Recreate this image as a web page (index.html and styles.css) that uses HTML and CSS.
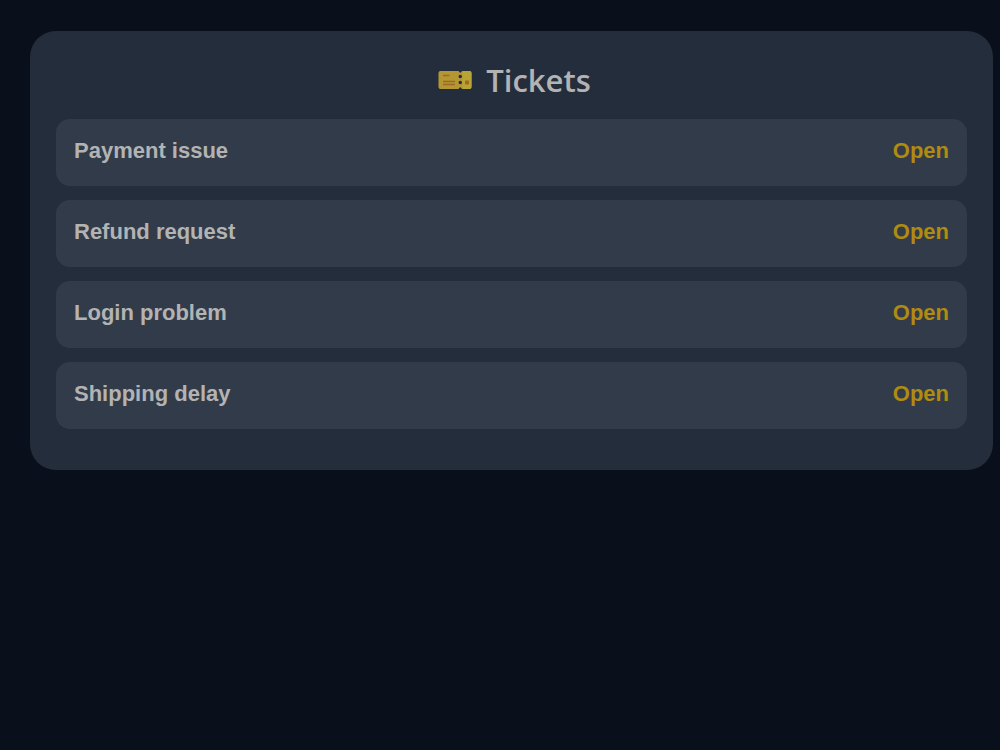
FILE: index.html
```html
<!DOCTYPE html>
<html lang="en">
<head>
<meta charset="utf-8">
<meta name="viewport" content="width=device-width, initial-scale=1">
<title>Tickets</title>
<link rel="stylesheet" href="styles.css">
</head>
<body>
<main class="panel">
  <h1 class="panel-title">
    <svg class="ticket-icon" viewBox="0 0 34 20" aria-hidden="true">
      <path fill="#b49733" d="M2.500 1H20q1 0 1.300 1 1 1.600 2 0 .3-1 1.300-1H31.500Q33.500 1 33.500 3V17Q33.500 19 31.500 19H24.600q-1 0-1.300-1-1-1.600-2 0-.3 1-1.300 1H2.500Q.5 19 .5 17V3Q.5 1 2.500 1Z"/>
      <path fill="#b8a335" d="M24.600 1H31.500Q33.500 1 33.500 3V17Q33.500 19 31.500 19H24.600Z"/>
      <path fill="none" stroke="#9c6a26" stroke-width="1.300" d="M5 5.500h6.500M5 11.500h12M5 14.500h12"/>
      <rect x="27" y="10.500" width="4" height="4" rx="1" fill="#a5662b"/>
      <g fill="#242d3b"><circle cx="22.300" cy="6.500" r="1.700"/><circle cx="22.300" cy="12.500" r="1.700"/></g>
    </svg>
    <span>Tickets</span>
  </h1>
  <ul class="ticket-list">
    <li class="ticket"><span>Payment issue</span><span class="status">Open</span></li>
    <li class="ticket"><span>Refund request</span><span class="status">Open</span></li>
    <li class="ticket"><span>Login problem</span><span class="status">Open</span></li>
    <li class="ticket"><span>Shipping delay</span><span class="status">Open</span></li>
  </ul>
</main>
</body>
</html>
```
FILE: styles.css
```css
* {
  box-sizing: border-box;
}

body {
  margin: 0;
  padding: 31px 7px 31px 30px;
  background: #09101c;
  color: #b3b3b3;
  font-family: "Liberation Sans", Arial, sans-serif;
}

.panel {
  padding: 26px 26px 41px;
  border-radius: 26px;
  background: #242d3b;
}

.panel-title {
  display: flex;
  align-items: center;
  justify-content: center;
  gap: 14px;
  margin: 0 0 16px;
  padding-left: 6px;
  font: 600 31px/46px "Open Sans", "Noto Sans", sans-serif;
}

.ticket-icon {
  width: 34px;
  height: 20px;
}

.ticket-list {
  display: grid;
  gap: 14px;
  margin: 0;
  padding: 0;
  list-style: none;
}

.ticket {
  display: flex;
  justify-content: space-between;
  padding: 19px 18px 22px;
  border-radius: 14px;
  background: #323b49;
  font-size: 22px;
  font-weight: 700;
  line-height: 26px;
}

.status {
  color: #af8b10;
}
```
